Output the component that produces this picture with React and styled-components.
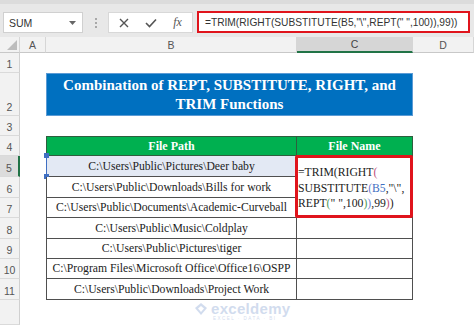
import React from "react";
import styled, { createGlobalStyle } from "styled-components";

const Global = createGlobalStyle`
  body {
    margin: 0;
    background: #ffffff;
    font-family: "Liberation Sans", Arial, sans-serif;
  }
`;

const Window = styled.div`
  width: 474px;
  height: 325px;
  overflow: hidden;
  position: relative;
  background: #ffffff;
`;

const Toolbar = styled.div`
  height: 37px;
  box-sizing: border-box;
  background: #e8e8e8;
  border-top: 4px solid #dcdcdc;
  display: flex;
  align-items: flex-start;
  padding: 8px 4px 0 3px;
`;

const NameBox = styled.div`
  width: 80px;
  height: 21px;
  box-sizing: border-box;
  background: #ffffff;
  border: 1px solid #d0d0d0;
  display: flex;
  align-items: center;
  justify-content: space-between;
  padding: 0 6px 0 5px;
  font-size: 10.5px;
  color: #333;
`;

const Grip = styled.div`
  width: 25px;
  height: 21px;
  display: flex;
  flex-direction: column;
  align-items: center;
  justify-content: center;
  gap: 2px;

  span {
    width: 2px;
    height: 2px;
    background: #a8a8a8;
  }
`;

const Buttons = styled.div`
  width: 85px;
  height: 21px;
  box-sizing: border-box;
  background: #ffffff;
  border: 1px solid #d8d8d8;
  display: flex;
  align-items: center;
  justify-content: space-around;
  padding: 0 2px;
  color: #555;
`;

const Fx = styled.span`
  font-family: "Liberation Serif", "Times New Roman", serif;
  font-style: italic;
  font-size: 12px;
  color: #555;
`;

const FormulaBox = styled.div`
  flex: 1;
  margin-left: 4px;
  height: 22px;
  margin-top: -1px;
  box-sizing: border-box;
  background: #ffffff;
  border: 2px solid #e0141c;
  display: flex;
  align-items: center;
  padding-left: 6px;
  font-size: 10.2px;
  color: #333;
  white-space: nowrap;
`;

const Sheet = styled.div`
  display: grid;
  grid-template-columns: 20px 26px 251px 116px 1fr;
  grid-template-rows: 16px 20px 43px 20px 20px 21px 21px 20px 21px 20px 20px 21px 1fr;
  height: 288px;
  background: #ffffff;
`;

const Corner = styled.div`
  grid-column: 1;
  grid-row: 1;
  background: #f2f2f2;
  border-bottom: 1px solid #c8c8c8;
  border-right: 1px solid #d6d6d6;
  position: relative;

  &::after {
    content: "";
    position: absolute;
    right: 2px;
    bottom: 2px;
    width: 0;
    height: 0;
    border-left: 10px solid transparent;
    border-bottom: 10px solid #bdbdbd;
  }
`;

const ColHead = styled.div`
  grid-column: ${(p) => p.$col};
  grid-row: 1;
  background: ${(p) => (p.$active ? "#d6d6d6" : "#f2f2f2")};
  border-right: 1px solid #d6d6d6;
  border-bottom: ${(p) => (p.$active ? "2px solid #217346" : "1px solid #c8c8c8")};
  display: flex;
  align-items: center;
  justify-content: center;
  font-size: 10.5px;
  color: ${(p) => (p.$active ? "#444" : "#555")};
`;

const RowHead = styled.div`
  grid-column: 1;
  grid-row: ${(p) => p.$row};
  background: ${(p) => (p.$active ? "#dcdcdc" : "#f2f2f2")};
  border-bottom: 1px solid #dadada;
  border-right: ${(p) => (p.$active ? "2px solid #217346" : "1px solid #d0d0d0")};
  display: flex;
  align-items: flex-end;
  justify-content: center;
  padding-bottom: 2px;
  box-sizing: border-box;
  font-size: 10.5px;
  color: #555;
`;

const Title = styled.div`
  grid-column: 3 / 5;
  grid-row: 3;
  background: #0070c0;
  border: 1px solid #5b9bd5;
  display: flex;
  align-items: center;
  justify-content: center;
  text-align: center;
  font-family: "Liberation Serif", "Times New Roman", serif;
  font-weight: bold;
  font-size: 15px;
  line-height: 19px;
  color: #ffffff;
`;

const HeadCell = styled.div`
  grid-column: ${(p) => p.$col};
  grid-row: 5;
  background: #00b050;
  border-top: 1px solid #2e5e3e;
  border-bottom: 1px solid #2e5e3e;
  border-right: 1px solid #2e5e3e;
  border-left: ${(p) => (p.$first ? "1px solid #2e5e3e" : "none")};
  display: flex;
  align-items: center;
  justify-content: center;
  font-family: "Liberation Serif", "Times New Roman", serif;
  font-weight: bold;
  font-size: 12px;
  color: #ffffff;
`;

const PathCell = styled.div`
  grid-column: 3;
  grid-row: ${(p) => p.$row};
  position: relative;
  background: ${(p) => (p.$selected ? "#e3e9f4" : "#ffffff")};
  border-left: 1px solid ${(p) => (p.$selected ? "#3f6fc2" : "#4f4f4f")};
  border-right: 1px solid #4f4f4f;
  border-bottom: 1px solid #4f4f4f;
  display: flex;
  align-items: center;
  justify-content: center;
  font-family: "Liberation Serif", "Times New Roman", serif;
  font-size: 11.7px;
  color: #1c1c1c;
  white-space: nowrap;

  ${(p) =>
    p.$selected &&
    `
    &::before, &::after {
      content: "";
      position: absolute;
      left: -3px;
      width: 5px;
      height: 5px;
      background: #3f6fc2;
    }
    &::before { top: -3px; }
    &::after { bottom: -3px; }
  `}
`;

const NameCell = styled.div`
  grid-column: 4;
  grid-row: ${(p) => p.$row};
  border-right: 1px solid #4f4f4f;
  border-bottom: 1px solid #4f4f4f;
`;

const Editor = styled.div`
  grid-column: 4;
  grid-row: 6 / 9;
  z-index: 2;
  margin: -1px 0 0 -2px;
  background: #ffffff;
  border: 3px solid #e0141c;
  border-radius: 2px;
  padding: 7px 0 0 0;
  font-family: "Liberation Serif", "Times New Roman", serif;
  font-size: 11.7px;
  line-height: 15.5px;
  color: #1c1c1c;
  white-space: nowrap;
`;

const Tok = styled.span`
  color: ${(p) => p.$c};
`;

const Watermark = styled.div`
  position: absolute;
  left: 194px;
  top: 302px;
  display: flex;
  align-items: flex-start;
  gap: 3px;
  opacity: 0.4;
`;

const MarkText = styled.div`
  display: flex;
  flex-direction: column;
  align-items: flex-start;
  font-family: "Liberation Sans", Arial, sans-serif;
  color: #8fa9d6;

  b {
    font-size: 15px;
    line-height: 14px;
    font-weight: bold;
    letter-spacing: 0.3px;
  }

  small {
    font-size: 4.5px;
    letter-spacing: 1.5px;
    margin-left: 2px;
  }
`;

const paths = [
  "C:\\Users\\Public\\Pictures\\Deer baby",
  "C:\\Users\\Public\\Downloads\\Bills for work",
  "C:\\Users\\Public\\Documents\\Academic-Curveball",
  "C:\\Users\\Public\\Music\\Coldplay",
  "C:\\Users\\Public\\Pictures\\tiger",
  "C:\\Program Files\\Microsoft Office\\Office16\\OSPP",
  "C:\\Users\\Public\\Downloads\\Project Work",
];

const cols = ["A", "B", "C", "D"];

export default function App() {
  return (
    <Window>
      <Global />
      <Toolbar>
        <NameBox>
          SUM
          <svg width="7" height="4" viewBox="0 0 7 4">
            <path d="M0 0 L7 0 L3.5 4 Z" fill="#666" />
          </svg>
        </NameBox>
        <Grip>
          <span />
          <span />
          <span />
        </Grip>
        <Buttons>
          <svg width="10" height="10" viewBox="0 0 10 10">
            <path d="M1 1 L9 9 M9 1 L1 9" stroke="#555" strokeWidth="1.4" />
          </svg>
          <svg width="12" height="10" viewBox="0 0 12 10">
            <path d="M1 5 L4.5 8.5 L11 1.5" stroke="#555" strokeWidth="1.6" fill="none" />
          </svg>
          <Fx>fx</Fx>
        </Buttons>
        <FormulaBox>=TRIM(RIGHT(SUBSTITUTE(B5,"\",REPT(" ",100)),99))</FormulaBox>
      </Toolbar>

      <Sheet>
        <Corner />
        {cols.map((c, i) => (
          <ColHead key={c} $col={i + 2} $active={c === "C"}>
            {c}
          </ColHead>
        ))}
        {Array.from({ length: 12 }, (_, i) => (
          <RowHead key={i} $row={i + 2} $active={i + 1 === 5}>
            {i + 1 <= 11 ? i + 1 : ""}
          </RowHead>
        ))}

        <Title>
          Combination of REPT, SUBSTITUTE, RIGHT, and
          <br />
          TRIM Functions
        </Title>

        <HeadCell $col={3} $first>
          File Path
        </HeadCell>
        <HeadCell $col={4}>File Name</HeadCell>

        {paths.map((p, i) => (
          <React.Fragment key={i}>
            <PathCell $row={i + 6} $selected={i === 0}>
              {p}
            </PathCell>
            <NameCell $row={i + 6} />
          </React.Fragment>
        ))}

        <Editor>
          =TRIM(RIGHT<Tok $c="#c0507e">(</Tok>
          <br />
          SUBSTITUTE<Tok $c="#6f7fd0">(</Tok>
          <Tok $c="#3f6fc2">B5</Tok>,"\",
          <br />
          REPT<Tok $c="#4f9a5a">(</Tok>" ",100<Tok $c="#4f9a5a">)</Tok>
          <Tok $c="#6f7fd0">)</Tok>,99<Tok $c="#c0507e">)</Tok>)
        </Editor>
      </Sheet>

      <Watermark>
        <svg width="14" height="14" viewBox="0 0 14 14">
          <path d="M7 1 L13 6 L7 13 L1 6 Z" fill="#8fa9d6" />
          <path d="M7 4 L10 6.5 L7 10 L4 6.5 Z" fill="#ffffff" />
        </svg>
        <MarkText>
          <b>exceldemy</b>
          <small>EXCEL · DATA · BI</small>
        </MarkText>
      </Watermark>
    </Window>
  );
}
